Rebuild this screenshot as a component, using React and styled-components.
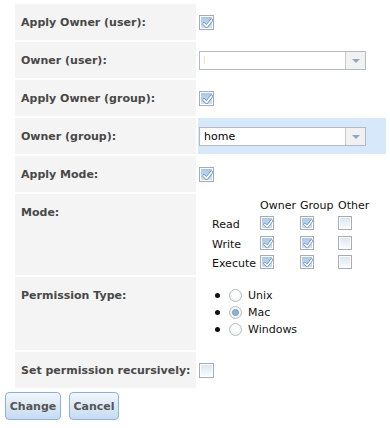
import React from "react";
import styled, { createGlobalStyle } from "styled-components";

const GlobalStyle = createGlobalStyle`
  body {
    margin: 0;
    background: #fff;
    font-family: "DejaVu Sans", Verdana, sans-serif;
  }
`;

const Form = styled.div`
  padding: 4px 0 0 5px;
`;

const FieldGrid = styled.div`
  display: grid;
  grid-template-columns: 181px 188px;
  gap: 2px;
  margin-left: 10px;
`;

const Label = styled.div`
  background: #f4f4f4;
  min-height: ${(p) => p.$height || 36}px;
  box-sizing: border-box;
  padding: ${(p) => (p.$top ? "12px" : "0")} 6px 0;
  display: flex;
  align-items: ${(p) => (p.$top ? "flex-start" : "center")};
  font-size: 11px;
  font-weight: bold;
  color: #484848;
  white-space: nowrap;
`;

const Value = styled.div`
  background: ${(p) => (p.$active ? "#d6e8fa" : "transparent")};
  min-height: 36px;
  display: flex;
  align-items: ${(p) => (p.$top ? "flex-start" : "center")};
  padding-left: 1px;
  font-size: 11px;
  color: #111;
`;

const Box = styled.span`
  display: inline-block;
  position: relative;
  width: ${(p) => p.$size}px;
  height: ${(p) => p.$size}px;
  box-sizing: border-box;
  border: 1px solid #a6abb6;
  box-shadow: inset 0 0 0 1px #fff;
  background: ${(p) =>
    p.$checked
      ? "linear-gradient(to bottom, #a7c5e6, #d2e3f4)"
      : "linear-gradient(to bottom, #d9e5f1, #fbfcfe)"};

  svg {
    position: absolute;
    left: 1px;
    top: 1px;
  }
`;

const Checkbox = ({ checked, size = 15 }) => (
  <Box $checked={checked} $size={size}>
    {checked && (
      <svg width={size - 2} height={size - 2} viewBox="0 0 13 13">
        <path d="M3 6.8 L5.6 9.4 L10.4 3.2" fill="none" stroke="#5f8ac0" strokeWidth="3.2" strokeLinecap="round" strokeLinejoin="round" />
        <path d="M3 6.8 L5.6 9.4 L10.4 3.2" fill="none" stroke="#fff" strokeWidth="1.8" strokeLinecap="round" strokeLinejoin="round" />
      </svg>
    )}
  </Box>
);

const SelectBox = styled.div`
  position: relative;
  width: 167px;
  height: 19px;
  box-sizing: border-box;
  border: 1px solid #b3b9c8;
  background: #fff;
  display: flex;
  align-items: center;
  padding-left: 4px;
  font-size: 11px;
  color: #000;
`;

const Caret = styled.span`
  width: 1px;
  height: 8px;
  background: #f6e7a6;
`;

const DropButton = styled.span`
  position: absolute;
  right: 0;
  top: 0;
  bottom: 0;
  width: 19px;
  border-left: 1px solid #c4c9d4;
  background: #f1f1f1;
  display: flex;
  align-items: center;
  justify-content: center;

  &::after {
    content: "";
    border-left: 4px solid transparent;
    border-right: 4px solid transparent;
    border-top: 4px solid #8ea6c9;
    margin-top: 1px;
  }
`;

const Select = ({ value }) => (
  <SelectBox>
    {value ? value : <Caret />}
    <DropButton />
  </SelectBox>
);

const ModeGrid = styled.div`
  display: grid;
  grid-template-columns: 46px 38px 36px 34px;
  grid-auto-rows: 18px;
  column-gap: 2px;
  row-gap: 1.5px;
  margin: 2px 0 0 13px;
  font-size: 11px;
  color: #111;
  align-items: center;
`;

const ModeHead = styled.span`
  white-space: nowrap;
`;

const RadioList = styled.ul`
  list-style: none;
  margin: 10px 0 0 16px;
  padding: 0;
  font-size: 11px;
  color: #111;
`;

const RadioItem = styled.li`
  display: flex;
  align-items: center;
  height: 17px;

  &::before {
    content: "";
    width: 5px;
    height: 5px;
    border-radius: 50%;
    background: #111;
    margin-right: 9px;
  }
`;

const Radio = styled.span`
  width: 13px;
  height: 13px;
  box-sizing: border-box;
  border-radius: 50%;
  border: 1px solid #b9bcc2;
  background: radial-gradient(circle at 50% 40%, #ffffff 30%, #e6e8ec 100%);
  display: flex;
  align-items: center;
  justify-content: center;
  margin-right: 6px;

  &::after {
    content: "";
    display: ${(p) => (p.$checked ? "block" : "none")};
    width: 5px;
    height: 5px;
    border-radius: 50%;
    background: #8bb2db;
    border: 1px solid #6f97c3;
  }
`;

const Buttons = styled.div`
  display: flex;
  gap: 8px;
  margin-top: 4px;
`;

const Button = styled.button`
  width: ${(p) => p.$width}px;
  height: 28px;
  padding: 0;
  border: 1px solid #8fb0d4;
  border-radius: 4px;
  background: linear-gradient(to bottom, #f1f6fd, #c5dbf2);
  font-family: "DejaVu Sans", Verdana, sans-serif;
  font-size: 11px;
  font-weight: bold;
  color: #555;
`;

const modes = [
  { name: "Read", values: [true, true, false] },
  { name: "Write", values: [true, true, false] },
  { name: "Execute", values: [true, true, false] },
];

const App = () => (
  <Form>
    <GlobalStyle />
    <FieldGrid>
      <Label>Apply Owner (user):</Label>
      <Value>
        <Checkbox checked />
      </Value>

      <Label>Owner (user):</Label>
      <Value>
        <Select />
      </Value>

      <Label>Apply Owner (group):</Label>
      <Value>
        <Checkbox checked />
      </Value>

      <Label>Owner (group):</Label>
      <Value $active>
        <Select value="home" />
      </Value>

      <Label>Apply Mode:</Label>
      <Value>
        <Checkbox checked />
      </Value>

      <Label $top $height={81}>
        Mode:
      </Label>
      <Value $top>
        <ModeGrid>
          <span />
          <ModeHead>Owner</ModeHead>
          <ModeHead>Group</ModeHead>
          <ModeHead>Other</ModeHead>
          {modes.map((m) => (
            <React.Fragment key={m.name}>
              <span>{m.name}</span>
              {m.values.map((v, i) => (
                <span key={i}>
                  <Checkbox checked={v} size={14} />
                </span>
              ))}
            </React.Fragment>
          ))}
        </ModeGrid>
      </Value>

      <Label $top $height={73}>
        Permission Type:
      </Label>
      <Value $top>
        <RadioList>
          <RadioItem>
            <Radio />
            Unix
          </RadioItem>
          <RadioItem>
            <Radio $checked />
            Mac
          </RadioItem>
          <RadioItem>
            <Radio />
            Windows
          </RadioItem>
        </RadioList>
      </Value>

      <Label>Set permission recursively:</Label>
      <Value>
        <Checkbox />
      </Value>
    </FieldGrid>
    <Buttons>
      <Button $width={56}>Change</Button>
      <Button $width={50}>Cancel</Button>
    </Buttons>
  </Form>
);

export default App;
